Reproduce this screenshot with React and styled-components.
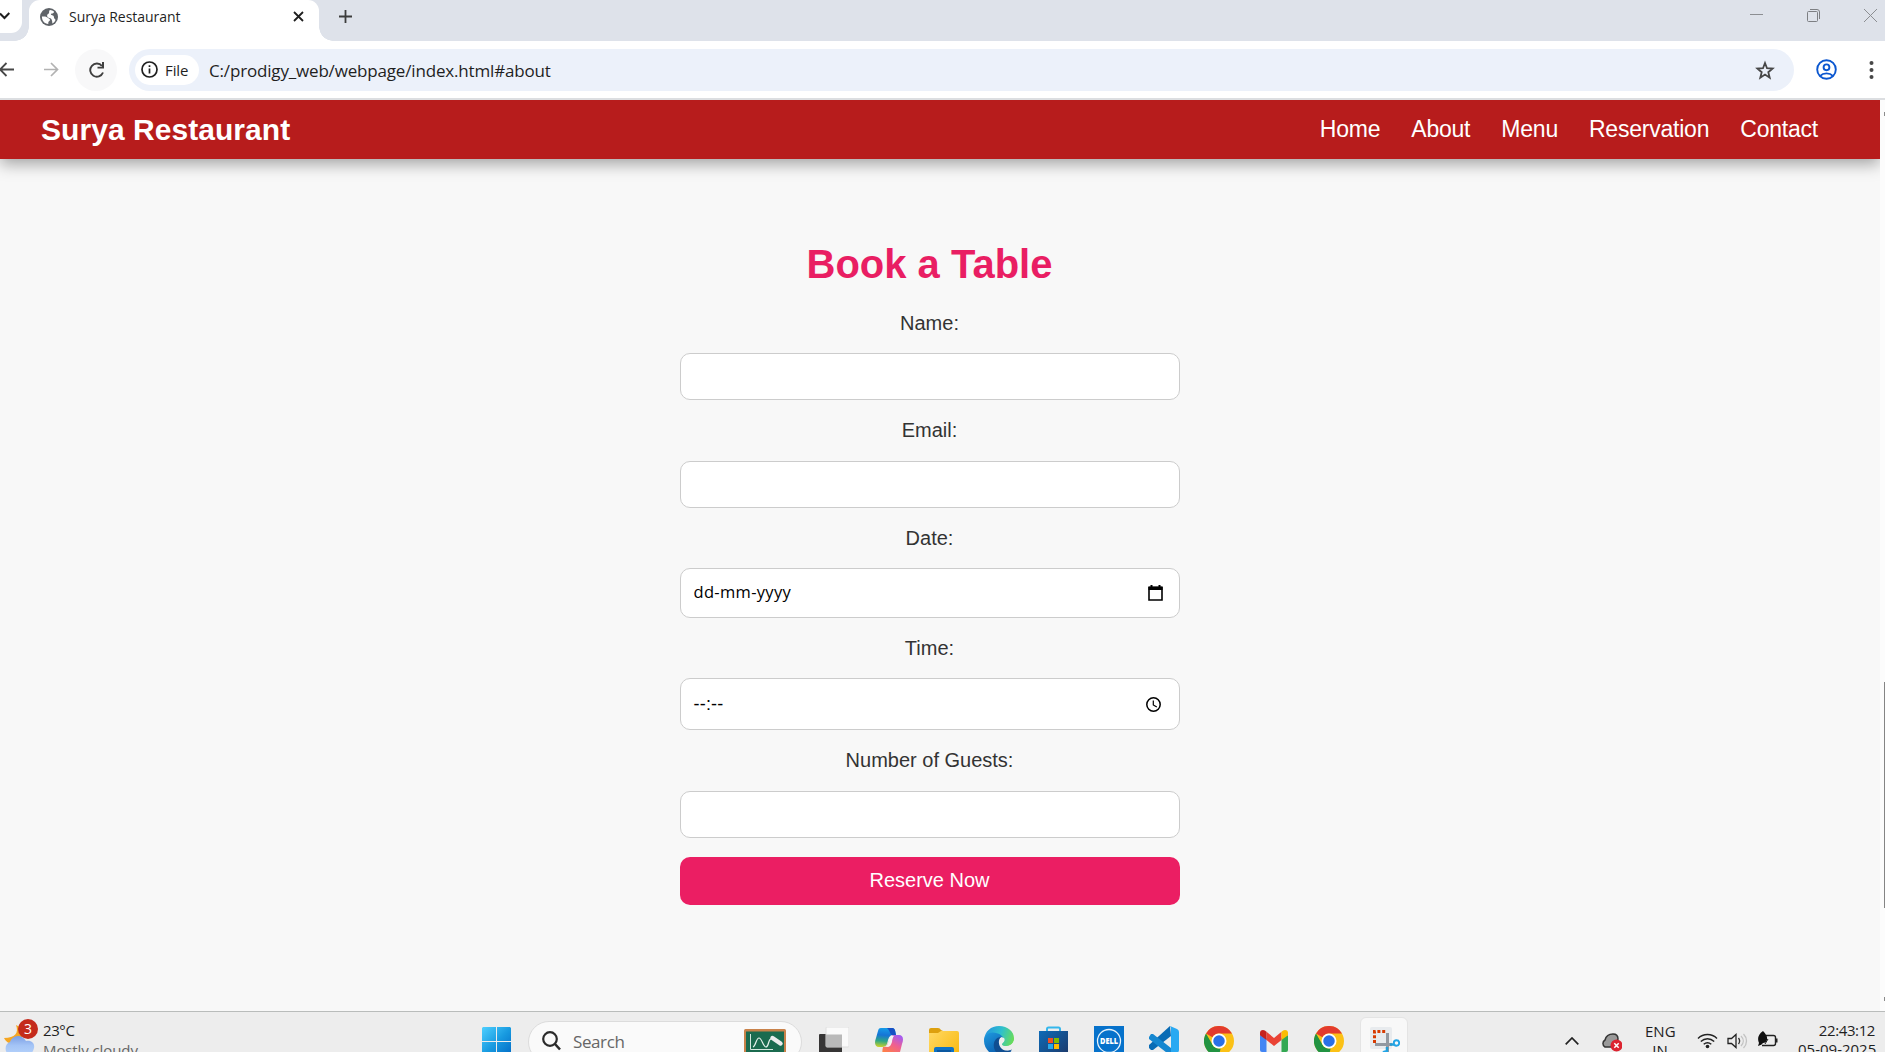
import React from "react";
import styled, { createGlobalStyle } from "styled-components";

const GlobalStyle = createGlobalStyle`
  *, *::before, *::after { box-sizing: border-box; }
  html, body { margin: 0; padding: 0; overflow: hidden; }
  body { font-family: "Open Sans", "Noto Sans", sans-serif; color: #1f1f1f; }
  svg { display: block; flex: none; }
`;

const Screen = styled.div`
  width: 1885px;
  height: 1052px;
  display: flex;
  flex-direction: column;
  overflow: hidden;
  background: #fff;
`;

/* Browser chrome */

const TabStrip = styled.div`
  height: 41px;
  flex: none;
  display: flex;
  align-items: flex-start;
  background: #dee2ea;
`;

const TabSearch = styled.div`
  width: 22px;
  height: 33px;
  margin-right: 7px;
  background: #fff;
  border-radius: 0 0 11px 0;
  padding-top: 11px;
`;

const Tab = styled.div`
  position: relative;
  width: 290px;
  height: 41px;
  display: flex;
  align-items: center;
  padding: 0 15px 8px 11px;
  background: #fff;
  border-radius: 11px 11px 0 0;
  &::before, &::after {
    content: "";
    position: absolute;
    bottom: 0;
    width: 14px;
    height: 14px;
  }
  &::before {
    left: -14px;
    background: radial-gradient(circle at 0 0, transparent 13.5px, #fff 14px);
  }
  &::after {
    right: -14px;
    background: radial-gradient(circle at 100% 0, transparent 13.5px, #fff 14px);
  }
`;

const TabTitle = styled.span`
  flex: 1;
  margin-left: 11px;
  font-size: 14px;
  line-height: 20px;
  letter-spacing: -0.03px;
  white-space: nowrap;
`;

const NewTab = styled.div`
  padding: 10px 0 0 20px;
`;

const WindowControls = styled.div`
  margin-left: auto;
  display: flex;
  align-items: center;
  gap: 44px;
  height: 31px;
  padding-right: 8px;
`;

const Toolbar = styled.div`
  height: 59px;
  flex: none;
  display: flex;
  align-items: center;
  background: #fff;
  border-bottom: 2px solid #dcdee1;
`;

const BackButton = styled.div`
  width: 14px;
  margin-right: 29px;
  overflow: hidden;
  display: flex;
  justify-content: flex-end;
`;

const ReloadButton = styled.div`
  width: 42px;
  height: 42px;
  margin: 0 12px 0 16px;
  padding-left: 1px;
  border-radius: 50%;
  background: #f8f8f9;
  display: flex;
  align-items: center;
  justify-content: center;
`;

const Omnibox = styled.div`
  width: 1665px;
  height: 42px;
  display: flex;
  align-items: center;
  padding: 0 19px 0 6px;
  border-radius: 21px;
  background: #ecf1fa;
`;

const FileChip = styled.div`
  width: 64px;
  height: 30px;
  display: flex;
  align-items: center;
  gap: 7px;
  padding-left: 6px;
  border-radius: 15px;
  background: #fff;
  font-size: 15px;
  font-weight: 500;
  letter-spacing: -0.1px;
`;

const Address = styled.span`
  flex: 1;
  margin-left: 10px;
  padding-top: 2px;
  font-size: 17px;
  line-height: 24px;
  letter-spacing: -0.17px;
  white-space: nowrap;
`;

const ToolbarEnd = styled.div`
  display: flex;
  align-items: center;
  gap: 32px;
  margin-left: 22px;
`;

/* Web page */

const Viewport = styled.div`
  flex: 1;
  min-height: 0;
  display: flex;
`;

const Page = styled.div`
  flex: 1;
  display: flex;
  flex-direction: column;
  overflow: hidden;
  background: #f8f8f8;
  font-family: "Liberation Sans", Arial, sans-serif;
`;

const ScrollTrack = styled.div`
  width: 5px;
  display: flex;
  flex-direction: column;
  align-items: flex-end;
  padding-top: 12px;
  background: #fcfcfc;
`;

const ScrollArrow = styled.i`
  width: 1px;
  height: 4px;
  background: #8b8b8b;
`;

const ScrollThumb = styled.i`
  width: 1px;
  height: 226px;
  margin: 566px 0 89px;
  background: #858585;
`;

const Header = styled.header`
  height: 59px;
  flex: none;
  display: flex;
  align-items: center;
  justify-content: space-between;
  padding: 0 62px 0 41px;
  background: #b71c1c;
  color: #fff;
  box-shadow: 0 5px 15px rgba(0, 0, 0, 0.35);
`;

const Brand = styled.div`
  font-size: 30px;
  font-weight: 700;
  line-height: 40px;
  letter-spacing: 0.05px;
`;

const Nav = styled.nav`
  display: flex;
  gap: 31px;
  padding-bottom: 2px;
  font-size: 23px;
  line-height: 32px;
  letter-spacing: -0.22px;
`;

const Booking = styled.section`
  display: flex;
  flex-direction: column;
  align-items: center;
  padding: 81px 21px 0 0;
  color: #333;
`;

const Title = styled.h2`
  margin: 0 0 22px;
  font-size: 40px;
  line-height: 48px;
  color: #e91e63;
`;

const Form = styled.form`
  width: 500px;
  display: flex;
  flex-direction: column;
`;

const Label = styled.label`
  margin-bottom: ${(p) => p.$space || 16}px;
  font-size: 20px;
  line-height: 27px;
  text-align: center;
`;

const Field = styled.div`
  height: ${(p) => p.$height || 47}px;
  margin-bottom: ${(p) => p.$gap || 17}px;
  display: flex;
  align-items: center;
  justify-content: space-between;
  padding: 0 ${(p) => p.$end || 16}px 0 13px;
  border: 1px solid #ccc;
  border-radius: 10px;
  background: #fff;
  color: #000;
`;

const DateText = styled.span`
  padding-bottom: 2px;
  font-family: "Open Sans", "Noto Sans", sans-serif;
  font-size: 16.5px;
  line-height: 22px;
  letter-spacing: 0.32px;
`;

const TimeText = styled.span`
  padding-bottom: 1px;
  font-size: 18px;
  line-height: 20px;
  letter-spacing: 0.2px;
`;

const Submit = styled.button`
  height: 48px;
  padding: 0 0 1px;
  border: 0;
  border-radius: 10px;
  background: #eb1e63;
  color: #fff;
  font: 20px "Liberation Sans", Arial, sans-serif;
`;

/* Taskbar */

const Taskbar = styled.div`
  height: 41px;
  flex: none;
  display: flex;
  align-items: flex-start;
  overflow: hidden;
  border-top: 1px solid #b9bcbb;
  background: #ededed;
`;

const Weather = styled.div`
  width: 482px;
  display: flex;
  padding: 5px 0 0 3px;
`;

const WeatherText = styled.div`
  display: flex;
  flex-direction: column;
  margin-left: 4px;
  padding-top: 3px;
  font-size: 15px;
  line-height: 20px;
  letter-spacing: -0.4px;
  white-space: nowrap;
`;

const Muted = styled.span`
  color: #666;
  letter-spacing: -0.1px;
`;

const SearchBox = styled.div`
  width: 274px;
  height: 42px;
  margin: 9px 17px 0 16px;
  display: flex;
  padding: 0 15px 0 13px;
  border: 1px solid #dcdcdc;
  border-radius: 21px;
  background: #fafafa;
`;

const SearchText = styled.span`
  flex: 1;
  padding: 8px 0 0 12px;
  font-size: 17px;
  line-height: 24px;
  letter-spacing: -0.4px;
  color: #666;
`;

const Spaced = styled.div`
  padding-top: ${(p) => p.$top || 0}px;
`;

const Apps = styled.div`
  display: flex;
  gap: 25px;
  padding-top: 14px;
`;

const AppSlot = styled.div`
  width: 30px;
  padding: ${(p) => p.$top || 0}px 0 0 ${(p) => p.$left || 0}px;
`;

const ActiveApp = styled.div`
  width: 48px;
  height: 46px;
  margin: 5px 0 0 16px;
  padding: 9px 0 0 9px;
  border: 1px solid #e4e4e4;
  border-radius: 6px;
  background: #f8f8f8;
`;

const Tray = styled.div`
  margin-left: auto;
  display: flex;
  padding-right: 10px;
`;

const TrayText = styled.div`
  width: ${(p) => p.$width}px;
  display: flex;
  flex-direction: column;
  padding-top: ${(p) => p.$top}px;
  font-size: 15px;
  line-height: 19px;
  text-align: ${(p) => p.$align || "center"};
  white-space: nowrap;
`;

const Clock = styled.span`
  letter-spacing: -0.4px;
`;

const TrayIcon = styled.div`
  width: ${(p) => p.$width}px;
  padding: ${(p) => p.$top}px 0 0 ${(p) => p.$left || 0}px;
`;

const Icon = ({ w, h, box, children, ...rest }) => (
  <svg width={w} height={h} viewBox={box || `0 0 ${w} ${h}`} fill="none" {...rest}>
    {children}
  </svg>
);

const Globe = () => (
  <Icon w={18} h={18}>
    <circle cx="9" cy="9" r="9" fill="#5f6368" />
    <path d="M1.900 8.600c2.600-.4 5.200 0 6.300 1.500.5.700 1.900.8 1.800 1.800-.2 1.100-1.700 1.300-1.700 2.500v1.700C4.500 15.900 1.900 12.800 1.900 8.600Z" fill="#fff" />
    <path d="M10 2c1.600.100 3 .700 4.100 1.700-.2 1.100-1.100 1.700-2.300 1.800-.9.100-1.100.700-.7 1.300.5.700 1.600.3 2.300 1 .9.900.3 1.900.9 2.600.5.600 1.200.6 1.200 1.500-.6 1.800-1.900 3.100-3.300 3.700.3-1.600-.1-2.400-.4-3.500-.3-1.300-1.100-1.700-2.200-2.100-1.300-.5-2.600-1.100-2.500-2.600.1-1.300 1.800-1.400 2-2.600.1-.9-.2-2.100.9-2.800Z" fill="#fff" />
  </Icon>
);

const Chrome = () => (
  <Icon w={30} h={30} box="0 0 48 48">
    <circle cx="24" cy="24" r="24" fill="#fbc116" />
    <path d="M3.200 12A24 24 0 0 1 44.800 12H24a12 12 0 0 0-10.400 6Z" fill="#e33b2e" />
    <path d="M3.200 12 13.600 30A12 12 0 0 0 24 36l2.500-.2L24 48A24 24 0 0 1 3.200 12Z" fill="#229342" />
    <circle cx="24" cy="24" r="12" fill="#fff" />
    <circle cx="24" cy="24" r="9.200" fill="#2a70e8" />
  </Icon>
);

const WeatherIcon = () => (
  <Icon w={36} h={38}>
    <path d="M13 8c3 8-1 13-12 13 3 7 13 8 18 2V11Z" fill="#f5a623" />
    <path d="M7 38a7 7 0 0 1 0-13c1-3 4-6 8-6s6 2 8 5c6-1 9 3 8 7s-3 7-7 7Z" fill="url(#cloud)" />
    <circle cx="25" cy="12" r="10" fill="#c42b1c" />
    <text x="25" y="17" textAnchor="middle" fontFamily="Open Sans, sans-serif" fontSize="14" fill="#fff">3</text>
    <defs>
      <linearGradient id="cloud" x1="0" y1="19" x2="0" y2="38" gradientUnits="userSpaceOnUse">
        <stop stopColor="#7b9ee4" /><stop offset=".5" stopColor="#a4c4f6" /><stop offset="1" stopColor="#b5d2fb" />
      </linearGradient>
    </defs>
  </Icon>
);

const StartIcon = () => (
  <Icon w={30} h={30}>
    <defs>
      <linearGradient id="win" x1="0" y1="0" x2="30" y2="30" gradientUnits="userSpaceOnUse">
        <stop stopColor="#4fd0ff" /><stop offset=".5" stopColor="#189ae0" /><stop offset="1" stopColor="#0067c4" />
      </linearGradient>
    </defs>
    <path d="M1 0h13v14H0V1ZM15 0h13l1 1v13H15ZM0 15h14v14H0ZM15 15h14v14H15Z" fill="url(#win)" />
  </Icon>
);

const Board = () => (
  <Icon w={42} h={30}>
    <rect width="42" height="30" rx="1.500" fill="#c9824a" />
    <rect x="2" y="2.500" width="38" height="26" fill="#1b6b4f" />
    <path d="M6.500 5v15.500H29" stroke="#d5e8df" />
    <path d="M9 18c3-1 3-9 6-9s4 9 7 9 2-8 5-8" stroke="#e8f3ee" strokeWidth="1.200" />
    <path d="m28.500 9 8 5.500" stroke="#ececec" strokeWidth="4.500" strokeLinecap="round" />
  </Icon>
);

const TaskView = () => (
  <Icon w={30} h={26}>
    <rect y="7" width="23" height="22" rx="1" fill="#363535" />
    <rect x="7" width="23" height="20" rx="1" fill="#fafafa" stroke="#dedede" />
    <path d="M7 7.500h16V20H7Z" fill="#b9b9b9" />
  </Icon>
);

const Copilot = () => (
  <Icon w={28} h={28}>
    <defs>
      <linearGradient id="cpa" x1="8" y1="0" x2="6" y2="20" gradientUnits="userSpaceOnUse">
        <stop stopColor="#159be8" /><stop offset=".35" stopColor="#1674d6" /><stop offset=".65" stopColor="#30a785" /><stop offset="1" stopColor="#e5d91a" />
      </linearGradient>
      <linearGradient id="cpb" x1="22" y1="7" x2="12" y2="26" gradientUnits="userSpaceOnUse">
        <stop stopColor="#a75cee" /><stop offset=".45" stopColor="#ef5f91" /><stop offset="1" stopColor="#ff8243" />
      </linearGradient>
    </defs>
    <path d="M6 0h11c3 0 3 2 4 7h-3c-3 0-4 2-5 5l-1 4c-1 2-2 3-5 3H4C0 19-1 15 1 10L3 3c.5-2 1-3 3-3Z" fill="url(#cpa)" />
    <path d="M12 0h5c3 0 3 2 4 7h-4c-2 0-2-5-5-7Z" fill="#1750c4" />
    <path d="M20 7h4c4 0 5 4 3 9l-2 8c-1 3-2 4-5 4H9c-2 0-2-5-1-9 3 0 4-1 5-4l2-5c1-2 2-3 5-3Z" fill="url(#cpb)" />
    <path d="M16 8c-2 1-2 4-3 7s-2 4-4 4h3c3 0 4-2 5-5 0-2 1-5 2-6Z" fill="#f4f2f3" />
  </Icon>
);

const Explorer = () => (
  <Icon w={30} h={28}>
    <path d="M0 2Q0 0 2 0h7q2 0 3 2l2 1v5H0Z" fill="#dda00e" />
    <path d="M0 5h9l3-2h16q2 0 2 2v23H0Z" fill="url(#fold)" />
    <path d="M5 28v-7q0-2 2-2h16q2 0 2 2v7Z" fill="#0f73c6" />
    <path d="M8 23h14" stroke="#0a4f93" strokeWidth="1.500" />
    <defs><linearGradient id="fold" x1="0" y1="3" x2="30" y2="28" gradientUnits="userSpaceOnUse"><stop stopColor="#ffd965" /><stop offset="1" stopColor="#f9b90f" /></linearGradient></defs>
  </Icon>
);

const Edge = () => (
  <Icon w={30} h={30}>
    <defs>
      <linearGradient id="edg" x1="3" y1="5" x2="29" y2="14" gradientUnits="userSpaceOnUse">
        <stop stopColor="#2499dd" /><stop offset=".5" stopColor="#2fc0cd" /><stop offset="1" stopColor="#68dc5a" />
      </linearGradient>
      <linearGradient id="edb" x1="0" y1="10" x2="12" y2="30" gradientUnits="userSpaceOnUse">
        <stop stopColor="#1c93da" /><stop offset="1" stopColor="#0b5cad" />
      </linearGradient>
    </defs>
    <path d="M0 14C1 5 7 0 15 0c9 0 15 6 15 12 0 5-4 8-8 8-4 0-5-1-4-3 2-3 0-6-4-6Z" fill="url(#edg)" />
    <path d="M0 15C0 8 7 5 12 7c5 1 8 4 8 8l-3-4c-4 1-5 9 1 13 4 3 8 2 10 0-4 7-17 8-23 2-3-3-5-7-5-11Z" fill="url(#edb)" />
    <path d="M10 17c1-4 4-6 7-6-3 3-3 8 1 12 3 2 7 2 10 0-3 5-9 8-13 6-4-3-6-8-5-12Z" fill="#104e91" />
    <path d="M20 12c1.500 2 0 4-1.500 5.500-.8 1.200 0 2.500 3.500 2.500 3 0 5-1 6.500-2.500l.5 4.500c-3 3-8 3-11 0-3-4-3-9-.5-11Z" fill="#ededed" />
    <path d="M18.500 17.500C17.500 19 19 20 22 20c4 0 8-3 8-8l-9-1c1.500 2.500 0 4.500-2.500 6.500Z" fill="url(#edg)" />
  </Icon>
);

const Store = () => (
  <Icon w={29} h={30}>
    <path d="M8 6V3q0-1.500 1.500-1.500h10Q21 1.500 21 3v3" stroke="#35b7ec" strokeWidth="2" />
    <path d="M0 5h29v25H0Z" fill="url(#sto)" />
    <path d="M9 12h5v5H9Z" fill="#f25022" /><path d="M15 12h5v5h-5Z" fill="#7fba00" />
    <path d="M9 18h5v5H9Z" fill="#28a8ea" /><path d="M15 18h5v5h-5Z" fill="#ffb900" />
    <defs><linearGradient id="sto" x1="0" y1="5" x2="25" y2="30" gradientUnits="userSpaceOnUse"><stop stopColor="#0d6bb8" /><stop offset="1" stopColor="#1c3c6e" /></linearGradient></defs>
  </Icon>
);

const Dell = () => (
  <Icon w={30} h={30}>
    <rect width="30" height="30" fill="#0672cb" />
    <circle cx="15" cy="15" r="11.500" stroke="#e8f3fb" strokeWidth="1.300" />
    <text x="15" y="18" textAnchor="middle" fontFamily="Open Sans, sans-serif" fontWeight="800" fontSize="8" textLength="18" lengthAdjust="spacingAndGlyphs" fill="#fff">DELL</text>
  </Icon>
);

const Code = () => (
  <Icon w={30} h={30}>
    <path d="M21 0 0 19v3l2 2h2L22 10Z" fill="#0a6cb5" />
    <path d="m0 11 2-3h2l18 14v8L0 13Z" fill="#1687d0" />
    <path d="m21 0 7 3q2 1 2 3v18q0 2-2 3l-7 3 1-2V2Z" fill="#29a9f2" />
  </Icon>
);

const Gmail = () => (
  <Icon w={28} h={22}>
    <path d="M0 5v15q0 2 2 2h4.500V8Z" fill="#4285f4" />
    <path d="M28 5v15q0 2-2 2h-4.500V8Z" fill="#34a853" />
    <path d="M6.500 1.800 14 8l7.500-6.200V10L14 16 6.500 10Z" fill="#ea4335" />
    <path d="M0 3Q0 0 3 0q2 0 3.500 1.800V10L0 5.200Z" fill="#c5221f" />
    <path d="M28 3q0-3-3-3-2 0-3.500 1.800V10L28 5.200Z" fill="#fbbc04" />
  </Icon>
);

const Snip = () => (
  <Icon w={30} h={30}>
    <rect width="22" height="22" rx="2" fill="#e8ebee" />
    <path d="M4.500 16V4.500H16" stroke="#d83b01" strokeWidth="3" strokeDasharray="3 1.800" />
    <path d="M17.500 6v19M5 17.500h17" stroke="#9298a0" strokeWidth="3" />
    <path d="M20 17.500h4" stroke="#239fd8" strokeWidth="2.500" />
    <circle cx="26.500" cy="16" r="2.700" stroke="#22a4e6" strokeWidth="1.900" />
    <path d="M17 20v4" stroke="#239fd8" strokeWidth="2.500" />
    <circle cx="15.500" cy="27" r="2.700" stroke="#22a4e6" strokeWidth="1.900" />
  </Icon>
);

const fields = [
  { label: "Name:" },
  { label: "Email:", space: 17 },
  { label: "Date:", kind: "date", height: 50 },
  { label: "Time:", kind: "time", height: 52 },
  { label: "Number of Guests:", space: 17, gap: 19 },
];

const links = ["Home", "About", "Menu", "Reservation", "Contact"];

function BrowserChrome() {
  return (
    <>
      <TabStrip>
        <TabSearch>
          <Icon w={11} h={10}><path d="m0 2.500 4.500 4.500L9.300 2" stroke="#1f1f1f" strokeWidth="2" /></Icon>
        </TabSearch>
        <Tab>
          <Globe />
          <TabTitle>Surya Restaurant</TabTitle>
          <Icon w={11} h={11}><path d="m1 1 9 9M10 1l-9 9" stroke="#1f1f1f" strokeWidth="1.800" /></Icon>
        </Tab>
        <NewTab>
          <Icon w={13} h={13}><path d="M6.500 0v13M0 6.500h13" stroke="#3c3c3c" strokeWidth="1.800" /></Icon>
        </NewTab>
        <WindowControls>
          <Icon w={13} h={13}><path d="M0 5.500h13" stroke="#8c8e92" /></Icon>
          <Icon w={13} h={13}>
            <path d="M3 .5h7q2.500 0 2.500 2.500v7" stroke="#7d7f83" />
            <rect x=".5" y="2.500" width="10" height="10" rx="1" stroke="#7d7f83" />
          </Icon>
          <Icon w={13} h={13}><path d="m0 0 13 13M13 0 0 13" stroke="#8c8e92" /></Icon>
        </WindowControls>
      </TabStrip>
      <Toolbar>
        <BackButton>
          <Icon w={16} h={15}><path d="M16 7.500H2M8.500 1 2 7.500 8.500 14" stroke="#474747" strokeWidth="1.800" /></Icon>
        </BackButton>
        <Icon w={16} h={15}><path d="M1 7.500h13M8 1l6.500 6.500L8 14" stroke="#b2b2b2" strokeWidth="1.700" /></Icon>
        <ReloadButton>
          <Icon w={16} h={16}>
            <path d="M14 10.500A6.600 6.600 0 1 1 13 4" stroke="#3f3f3f" strokeWidth="1.900" />
            <path d="M15 0v6.500H8.500V4.700H13V0Z" fill="#3f3f3f" />
          </Icon>
        </ReloadButton>
        <Omnibox>
          <FileChip>
            <Icon w={17} h={17}>
              <circle cx="8.500" cy="8.500" r="7.500" stroke="#1f1f1f" strokeWidth="1.700" />
              <path d="M8.500 7.500v5M8.500 4.200v1.800" stroke="#1f1f1f" strokeWidth="1.700" />
            </Icon>
            File
          </FileChip>
          <Address>C:/prodigy_web/webpage/index.html#about</Address>
          <Icon w={20} h={20}>
            <path d="m10 3 2 5.200 5.600.4-4.300 3.600 1.400 5.500L10 14.600l-4.700 3.100 1.400-5.500-4.300-3.600L8 8.200Z" stroke="#474747" strokeWidth="1.800" />
          </Icon>
        </Omnibox>
        <ToolbarEnd>
          <Icon w={21} h={21}>
            <circle cx="10.500" cy="10.500" r="9.300" stroke="#0b57d0" strokeWidth="1.900" />
            <circle cx="10.500" cy="8.300" r="2.900" stroke="#0b57d0" strokeWidth="1.900" />
            <path d="M4.200 16.800c3-3.200 9.600-3.200 12.600 0" stroke="#0b57d0" strokeWidth="1.900" />
          </Icon>
          <Icon w={5} h={20}>
            <circle cx="2.500" cy="3" r="2" fill="#474747" /><circle cx="2.500" cy="10" r="2" fill="#474747" /><circle cx="2.500" cy="17" r="2" fill="#474747" />
          </Icon>
        </ToolbarEnd>
      </Toolbar>
    </>
  );
}

function BookingForm() {
  return (
    <Booking>
      <Title>Book a Table</Title>
      <Form>
        {fields.map((f) => (
          <React.Fragment key={f.label}>
            <Label $space={f.space}>{f.label}</Label>
            <Field $height={f.height} $gap={f.gap} $end={f.kind === "time" ? 18 : 16}>
              {f.kind === "date" && (
                <>
                  <DateText>dd-mm-yyyy</DateText>
                  <Icon w={15} h={16}>
                    <path d="M1 2.500h13V15H1Z" stroke="#000" strokeWidth="1.600" />
                    <path d="M.5 1.500h14V5H.5ZM2.500 0h2v2h-2ZM10.500 0h2v2h-2Z" fill="#000" />
                  </Icon>
                </>
              )}
              {f.kind === "time" && (
                <>
                  <TimeText>--:--</TimeText>
                  <Icon w={15} h={15}>
                    <circle cx="7.500" cy="7.500" r="6.700" stroke="#000" strokeWidth="1.500" />
                    <path d="M7.300 3.500V8l3.500 2" stroke="#000" strokeWidth="1.200" />
                  </Icon>
                </>
              )}
            </Field>
          </React.Fragment>
        ))}
        <Submit type="button">Reserve Now</Submit>
      </Form>
    </Booking>
  );
}

function SystemTaskbar() {
  return (
    <Taskbar>
      <Weather>
        <WeatherIcon />
        <WeatherText>
          <span>23°C</span>
          <Muted>Mostly cloudy</Muted>
        </WeatherText>
      </Weather>
      <Spaced $top={15}><StartIcon /></Spaced>
      <SearchBox>
        <Spaced $top={9}>
          <Icon w={19} h={20}>
            <circle cx="8" cy="8" r="6.800" stroke="#2b2b2b" strokeWidth="2.200" />
            <path d="m13 13 5 5.500" stroke="#2b2b2b" strokeWidth="2.600" />
          </Icon>
        </Spaced>
        <SearchText>Search</SearchText>
        <Spaced $top={7}><Board /></Spaced>
      </SearchBox>
      <Apps>
        <AppSlot $top={1}><TaskView /></AppSlot>
        <AppSlot $top={2} $left={1}><Copilot /></AppSlot>
        <AppSlot $top={2}><Explorer /></AppSlot>
        <AppSlot><Edge /></AppSlot>
        <AppSlot><Store /></AppSlot>
        <AppSlot><Dell /></AppSlot>
        <AppSlot><Code /></AppSlot>
        <AppSlot><Chrome /></AppSlot>
        <AppSlot $top={4} $left={1}><Gmail /></AppSlot>
        <AppSlot><Chrome /></AppSlot>
      </Apps>
      <ActiveApp><Snip /></ActiveApp>
      <Tray>
        <TrayIcon $width={37} $top={25}>
          <Icon w={14} h={8}><path d="m.7 7.300 6.300-6.300 6.300 6.300" stroke="#222" strokeWidth="1.700" /></Icon>
        </TrayIcon>
        <TrayIcon $width={43} $top={21}>
          <Icon w={20} h={19}>
            <path d="M3 14a4 4 0 0 1 0-7c1-4 4-6 8-6 3 0 5 2 5 5l-3 8Z" fill="#999" stroke="#333" strokeWidth="1.500" />
            <circle cx="14.500" cy="12.500" r="6" fill="#dc2430" />
            <path d="m12.300 10.300 4.400 4.400m0-4.400-4.400 4.400" stroke="#fff" strokeWidth="1.500" />
          </Icon>
        </TrayIcon>
        <TrayText $width={30} $top={10}><span>ENG</span><span>IN</span></TrayText>
        <TrayIcon $width={52} $top={20} $left={22}>
          <Icon w={21} h={18}>
            <path d="M1 6.500c5.400-5.300 13.600-5.300 19 0M3.800 9.500c4-3.700 9.400-3.700 13.400 0M6.700 12.300c2.300-2 5.300-2 7.600 0" stroke="#222" strokeWidth="1.400" />
            <circle cx="10.500" cy="14.500" r="1.800" fill="#222" />
          </Icon>
        </TrayIcon>
        <TrayIcon $width={30} $top={21}>
          <Icon w={21} h={17}>
            <path d="M1 5.500h3.500L9 1.500v13l-4.500-4H1Z" stroke="#222" strokeWidth="1.300" />
            <path d="M11.500 5c1.500 2 1.500 4 0 6" stroke="#333" strokeWidth="1.300" />
            <path d="M14 3c3 3 3 7 0 10M16.500 1c4 4 4 10 0 14" stroke="#c2c2c2" strokeWidth="1.300" />
          </Icon>
        </TrayIcon>
        <TrayIcon $width={41} $top={19}>
          <Icon w={21} h={18}>
            <path d="M9 4.500h7.500q2 0 2 2v6q0 2-2 2H5" stroke="#222" strokeWidth="1.400" />
            <path d="M19 7.500h1.500v4H19Z" fill="#222" />
            <path d="M6 0q5 5 4 9-1 3-4 3-1 2-5 3l1-3q-3-7 4-12Z" fill="#111" />
            <path d="m11 8-3 5" stroke="#222" />
          </Icon>
        </TrayIcon>
        <TrayText $width={77} $top={9} $align="right">
          <Clock>22:43:12</Clock>
          <span>05-09-2025</span>
        </TrayText>
      </Tray>
    </Taskbar>
  );
}

export default function App() {
  return (
    <Screen>
      <GlobalStyle />
      <BrowserChrome />
      <Viewport>
        <Page>
          <Header>
            <Brand>Surya Restaurant</Brand>
            <Nav>{links.map((l) => <span key={l}>{l}</span>)}</Nav>
          </Header>
          <BookingForm />
        </Page>
        <ScrollTrack>
          <ScrollArrow />
          <ScrollThumb />
          <ScrollArrow />
        </ScrollTrack>
      </Viewport>
      <SystemTaskbar />
    </Screen>
  );
}
